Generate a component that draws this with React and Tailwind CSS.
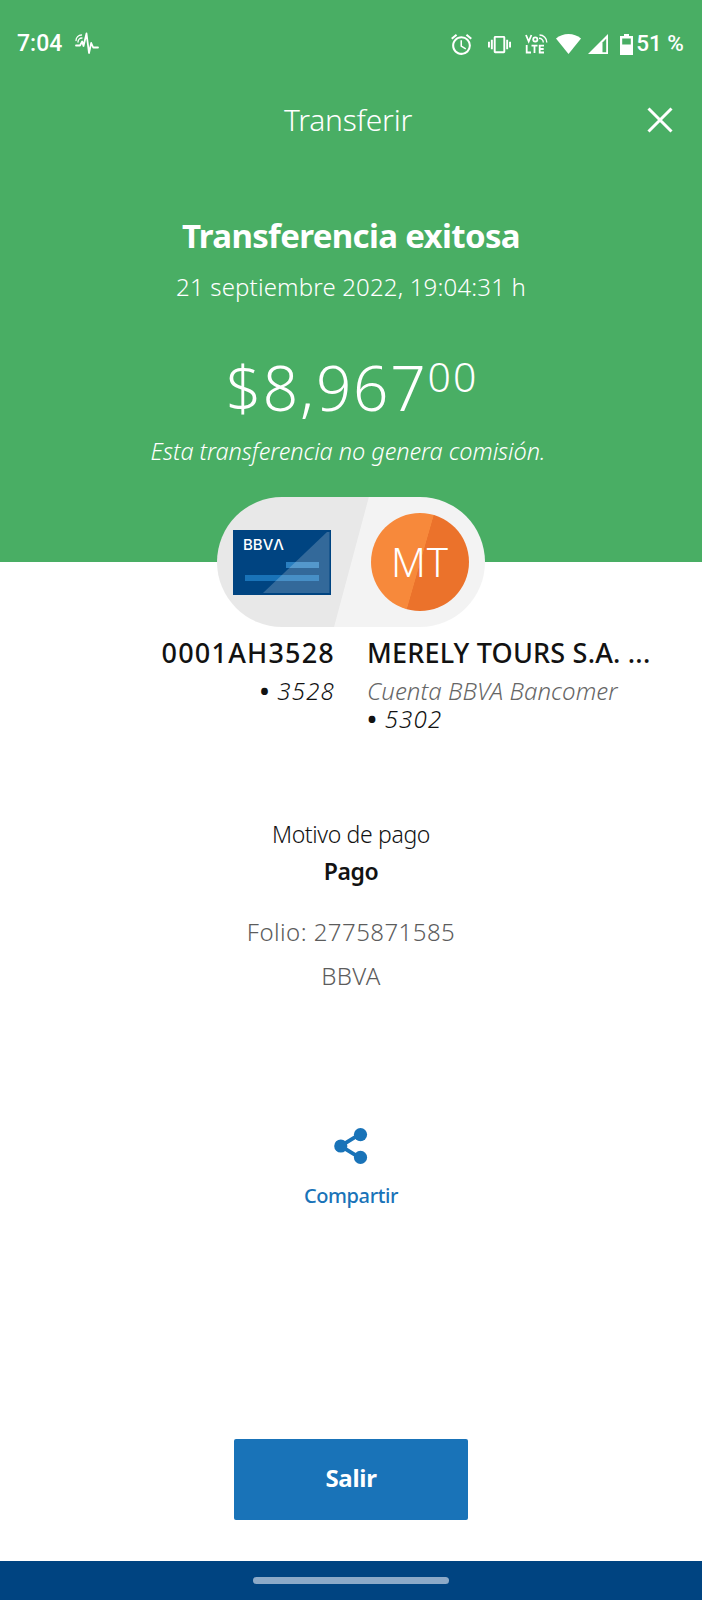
import React from 'react';
import { MdAlarm, MdVibration } from 'react-icons/md';

const PulseIcon = () => (
    <svg width="24" height="24" viewBox="0 0 24 24" fill="none" stroke="white" strokeLinecap="round" strokeLinejoin="round">
        <path d="M1 13.500h4l2.200-4 1.300 4.500L11.500 1.500 14 21l2.200-10 2 4.500H23" strokeWidth="1.800" />
        <path d="M1 8.500a5.500 5.500 0 0 1 5.500-5.500M3 10a4 4 0 0 1 4-4" strokeWidth="1.300" />
    </svg>
);

const VolteIcon = () => (
    <svg width="23" height="20" viewBox="0 0 23 20" fill="none" stroke="white" strokeWidth="1.8">
        <path d="M1 1l2.700 6.500L6.400 1" />
        <circle cx="10.300" cy="5.400" r="2.100" />
        <path d="M14 4.200a4.300 4.300 0 0 1 4.300 4.300M14.500 1a7.300 7.300 0 0 1 7.300 7.500" strokeWidth="1.400" />
        <path d="M1.700 11v7.500H6M6.500 11.600h6M9.500 11.600v7.300M19 11.600h-4.300v6.900H19M14.700 15h4" />
    </svg>
);

const WifiIcon = () => (
    <svg width="25" height="20" viewBox="0 0 25 20" fill="white">
        <path d="M12.500 20L0 4.500C3.500 1.600 7.800 0 12.500 0S21.500 1.600 25 4.500L12.500 20z" />
    </svg>
);

const SignalIcon = () => (
    <svg width="20" height="20" viewBox="0 0 20 20">
        <path d="M0 20L20 0v20H0z" fill="white" />
        <path d="M14.500 8.500L18.200 4.700v13.500h-3.700z" fill="#49ae64" />
    </svg>
);

const BatteryIcon = () => (
    <svg width="13" height="21" viewBox="0 0 13 21">
        <path d="M4 0h5v2h4v19H0V2h4V0z" fill="white" />
        <path d="M2.200 4.500h8.600v6H2.200z" fill="#49ae64" />
    </svg>
);

const CloseIcon = () => (
    <svg width="26" height="26" viewBox="0 0 26 26" fill="none" stroke="white" strokeWidth="3">
        <path d="M1.500 1.500l23 23M24.500 1.500l-23 23" />
    </svg>
);

const ShareIcon = () => (
    <svg width="34" height="36" viewBox="0 0 34 36" fill="#1973b8">
        <path d="M26 6.200L6.500 18 26 29.800" fill="none" stroke="#1973b8" strokeWidth="3.800" />
        <circle cx="6.800" cy="18" r="6.600" />
        <circle cx="26.500" cy="6.600" r="6.600" />
        <circle cx="26.500" cy="29.400" r="6.600" />
    </svg>
);

const StatusBar = () => (
    <div className="flex h-[88px] items-center pl-[17px] pr-[18px] font-['Roboto',sans-serif] text-[23px] font-medium">
        <span className="pt-px">7:04</span>
        <span className="ml-[13px]"><PulseIcon /></span>
        <div className="ml-auto flex items-center">
            <MdAlarm size={25} />
            <MdVibration size={23} className="ml-3.5" />
            <span className="ml-3.5"><VolteIcon /></span>
            <span className="ml-2"><WifiIcon /></span>
            <span className="ml-[7px]"><SignalIcon /></span>
            <span className="ml-3"><BatteryIcon /></span>
            <span className="ml-[3px] w-[48px] whitespace-nowrap text-[22.5px]">51 %</span>
        </div>
    </div>
);

const BankCard = () => (
    <div className="relative h-[65px] w-[98px] bg-[#004481]">
        <svg className="absolute inset-0" width="98" height="65" viewBox="0 0 98 65">
            <path d="M53 32h33v6H53z" fill="#2a7fc0" />
            <path d="M12 45h74v6H12z" fill="#1973b8" />
            <path d="M94 2h2.500v61H30z" fill="white" opacity="0.2" />
        </svg>
        <div className="absolute left-[10px] top-[7px] font-['Inter',sans-serif] text-[15px] font-medium leading-4 text-white">
            BBVΛ
        </div>
    </div>
);

const AccountsPill = () => (
    <div className="mx-auto -mt-[65px] flex h-[130px] w-[268px] items-center justify-between rounded-full bg-[linear-gradient(105deg,#e8e8e8_50%,#f3f3f3_50.3%)] px-4">
        <BankCard />
        <div className="flex size-[98px] items-center justify-center rounded-full bg-[linear-gradient(106deg,#f7893b_50%,#eb722b_50.5%)] text-[40px] font-light tracking-[1px] text-white">
            MT
        </div>
    </div>
);

const AccountNumber = ({ digits }) => (
    <p className="text-[24px] font-light italic leading-[28px] tracking-[1.2px]">
        <span className="font-bold">•</span> {digits}
    </p>
);

const App = () => {
    return (
        <div className="flex h-[1600px] w-[702px] flex-col bg-white font-['Noto_Sans',sans-serif] text-[#121212]">
            <header className="h-[562px] shrink-0 bg-[#49ae64] text-center text-white">
                <StatusBar />
                <div className="grid h-[64px] grid-cols-[1fr_auto_1fr] items-center pr-[29px] pl-[25px]">
                    <h1 className="col-start-2 pr-0.5 pb-0.5 text-[30px] font-light tracking-[-0.2px]">Transferir</h1>
                    <button className="justify-self-end"><CloseIcon /></button>
                </div>
                <h2 className="mt-[64px] text-[33px] font-bold leading-10 tracking-[-0.65px]">Transferencia exitosa</h2>
                <p className="mt-[11px] text-[24px] font-light leading-10 tracking-[0.17px]">21 septiembre 2022, 19:04:31 h</p>
                <div className="mt-12 flex h-16 items-start justify-center pl-0.5 font-light">
                    <span className="text-[62px] leading-[64px] tracking-[1.8px]">$8,967</span>
                    <span className="text-[41px] leading-[42px] tracking-[2px]">00</span>
                </div>
                <p className="mt-3 pr-1.5 text-[23.5px] font-light italic leading-10 tracking-[-0.05px]">Esta transferencia no genera comisión.</p>
            </header>

            <AccountsPill />

            <div className="mt-1.5 grid grid-cols-[335px_1fr] gap-x-[32px]">
                <div className="flex flex-col gap-1 text-right">
                    <p className="text-[27px] font-medium leading-10 tracking-[1.2px]">0001AH3528</p>
                    <AccountNumber digits="3528" />
                </div>
                <div>
                    <p className="text-[27px] font-medium leading-10 tracking-[0.2px]">MERELY TOURS S.A. ...</p>
                    <p className="mt-1 text-[24px] font-light italic leading-[28px] tracking-[0.07px] text-[#666]">Cuenta BBVA Bancomer</p>
                    <AccountNumber digits="5302" />
                </div>
            </div>

            <div className="mt-[83px] text-center text-[23px] leading-[37px]">
                <p className="font-light tracking-[-0.35px]">Motivo de pago</p>
                <p className="font-semibold tracking-[-0.4px]">Pago</p>
            </div>
            <div className="mt-[20px] text-center text-[24px] font-light leading-[44px] text-[#5c5c5c]">
                <p className="tracking-[0.45px]">Folio: 2775871585</p>
                <p className="tracking-[0.4px]">BBVA</p>
            </div>

            <button className="mx-auto mt-[130px] flex flex-col items-center text-[#1973b8]">
                <ShareIcon />
                <span className="mt-[17px] text-[20px] font-medium leading-[30px] tracking-[-0.4px]">Compartir</span>
            </button>

            <button className="mx-auto mt-auto h-[81px] w-[234px] rounded-xs bg-[#1973b8] pb-[3px] text-[24px] font-bold tracking-[-0.3px] text-white">
                Salir
            </button>
            <div className="mt-[41px] flex h-[39px] shrink-0 items-center justify-center bg-[#004481]">
                <div className="h-[7px] w-[196px] rounded-full bg-[#8caac8]" />
            </div>
        </div>
    );
};

export default App;
